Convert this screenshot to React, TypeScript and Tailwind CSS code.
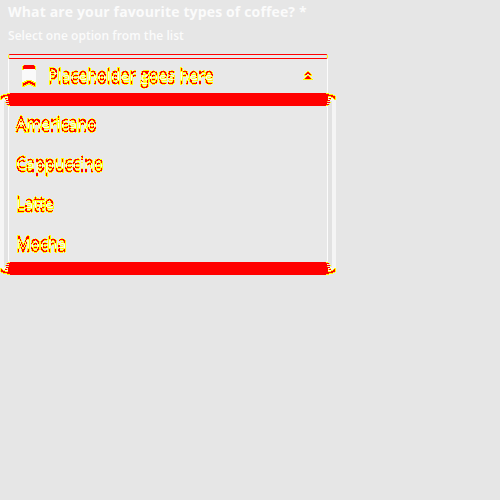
import React from "react";

const options = ["Americano", "Cappuccino", "Latte", "Mocha"];

function DiffFilter() {
  return (
    <svg width="0" height="0" className="absolute">
      <filter id="diff" x="-10%" y="-20%" width="120%" height="150%" colorInterpolationFilters="sRGB">
        <feOffset in="SourceAlpha" dy="4" result="b" />
        <feComposite in="SourceAlpha" in2="b" operator="xor" result="x" />
        <feComponentTransfer in="x" result="xt">
          <feFuncA type="discrete" tableValues="0 0 0 0 0 0 0 0 1 1" />
        </feComponentTransfer>
        <feFlood floodColor="#ff0000" />
        <feComposite in2="xt" operator="in" result="red" />
        <feComponentTransfer in="x" result="pt">
          <feFuncA type="discrete" tableValues="0 1 1 1 1 1 1 1 1 1" />
        </feComponentTransfer>
        <feFlood floodColor="#ffff00" />
        <feComposite in2="pt" operator="in" result="yellow" />
        <feComposite in="SourceAlpha" in2="b" operator="in" result="bw" />
        <feFlood floodColor="#fafafa" />
        <feComposite in2="bw" operator="in" result="white" />
        <feMerge>
          <feMergeNode in="yellow" />
          <feMergeNode in="white" />
          <feMergeNode in="red" />
        </feMerge>
      </filter>
    </svg>
  );
}

function Corner({ className }: { className: string }) {
  return (
    <svg width="10" height="14" viewBox="0 0 10 14" shapeRendering="crispEdges" className={className}>
      <path d="M1 4h2v-1h2v-1h5v12H0V6h1z" fill="#f5f5f5" />
      <path d="M4 8h4v6h-4z" fill="#e2e2e2" />
      <path d="M8 2h2v11h-1v-1h-2v-1h2v-1h-3v-1h3v-1h-3v-1h2v-1h-3v-1h3z" fill="#f00" />
      <path d="M3 1h7v2h-5v1h-2v1h-1v1h-1v-3h2z" fill="#f00" />
      <path d="M7 0h3v1h-3zM3 1h4v1h-4zM1 2h2v1h-2zM0 3h1v4h-1zM1 6h1v1h-1zM2 5h1v1h-1zM3 4h2v1h-2zM5 3h3v1h-3zM7 5h1v1h-1zM5 6h1v1h-1zM8 8h1v1h-1zM5 9h1v1h-1zM6 11h1v1h-1zM8 12h2v1h-2z" fill="#ff0" />
    </svg>
  );
}

export default function App() {
  return (
    <div className="h-[500px] w-[500px] overflow-hidden bg-[#e6e6e6] font-['Open_Sans','Noto_Sans',sans-serif]">
      <DiffFilter />
      <div className="h-[54px] pl-2 text-[#fbfbfb]">
        <div className="h-6 text-[14px] leading-6 font-bold tracking-[0.15px] whitespace-nowrap">What are your favourite types of coffee? *</div>
        <div className="h-6 text-[12px] leading-6 font-semibold tracking-[0.04px] whitespace-nowrap">Select one option from the list</div>
      </div>
      <div className="ml-2 h-[39px] w-80 border-x border-[#fcfcfc] bg-[#e8e8e8]">
        <div className="-mx-px h-[5px] rounded-[2px] border border-x-[#ff0] border-y-[#f00] bg-[#e8e8e8]" />
        <div className="flex h-[34px] items-center pr-[14px] pl-[13px]">
          <svg width="14" height="22" viewBox="0 0 14 22" shapeRendering="crispEdges">
            <path d="M0 3h14v15H0z" fill="#fafafa" />
            <path d="M1 0h12v1h1v4h-1v-1h-11v1H0V1h1z" fill="#ff0" />
            <path d="M2 0h10v1h1v3H1V1h1z" fill="#f00" />
            <path d="M0 17h2v-1h2v-1h6v1h2v1h2v5h-3v-1h-2v-1h-4v1h-2v1H0z" fill="#ff0" />
            <path d="M1 18h2v-1h2v-1h4v1h2v1h2v3h-1v-1h-2v-1h-2v-1h-2v1h-2v1h-2v1h-1z" fill="#f00" />
          </svg>
          <span className="-mt-1 ml-[12px] text-[16px] leading-6 whitespace-nowrap [-webkit-text-stroke:0.6px_black] [filter:url(#diff)]">Placeholder goes here</span>
          <svg width="10" height="10" viewBox="0 0 10 10" shapeRendering="crispEdges" className="ml-auto">
            <path d="M4 0h2v1h1v1h1v1h1v2H7V4H6V3H4v1H3v1H1V3h1V2h1V1h1zM4 4h2v1h1v1h1v1h1v1h1v1H0V8h1V7h1V6h1V5h1z" fill="#ff0" />
            <path d="M4 1h2v1h1v1h1v1h-2v-1h-2v1h-2v-1h1v-1h1zM4 5h2v1h1v1h1v1H2V7h1V6h1z" fill="#f00" />
          </svg>
        </div>
      </div>
      <div className="relative h-[182px] w-[336px]">
        <div className="mx-2 h-[13px] bg-[#f00]" />
        <div className="flex h-[156px]">
          <div className="w-1 bg-[#f5f5f5]" />
          <div className="w-1 bg-[#e2e2e2]" />
          <div className="flex-1 border-x border-[#fcfcfc] bg-[#e8e8e8] pl-[7px]">
            {options.map((o) => (
              <div key={o} className="h-10 pt-[4px] text-[16px] leading-6 tracking-[0.03px] whitespace-nowrap">
                <span className="inline-block [-webkit-text-stroke:0.6px_black] [filter:url(#diff)]">{o}</span>
              </div>
            ))}
          </div>
          <div className="w-1 bg-[#e2e2e2]" />
          <div className="w-1 bg-[#f5f5f5]" />
        </div>
        <div className="mx-2 h-[13px] bg-[#f00]" />
        <Corner className="absolute top-0 left-0" />
        <Corner className="absolute top-0 right-0 -scale-x-100" />
        <Corner className="absolute bottom-0 left-0 -scale-y-100" />
        <Corner className="absolute right-0 bottom-0 -scale-100" />
      </div>
    </div>
  );
}
